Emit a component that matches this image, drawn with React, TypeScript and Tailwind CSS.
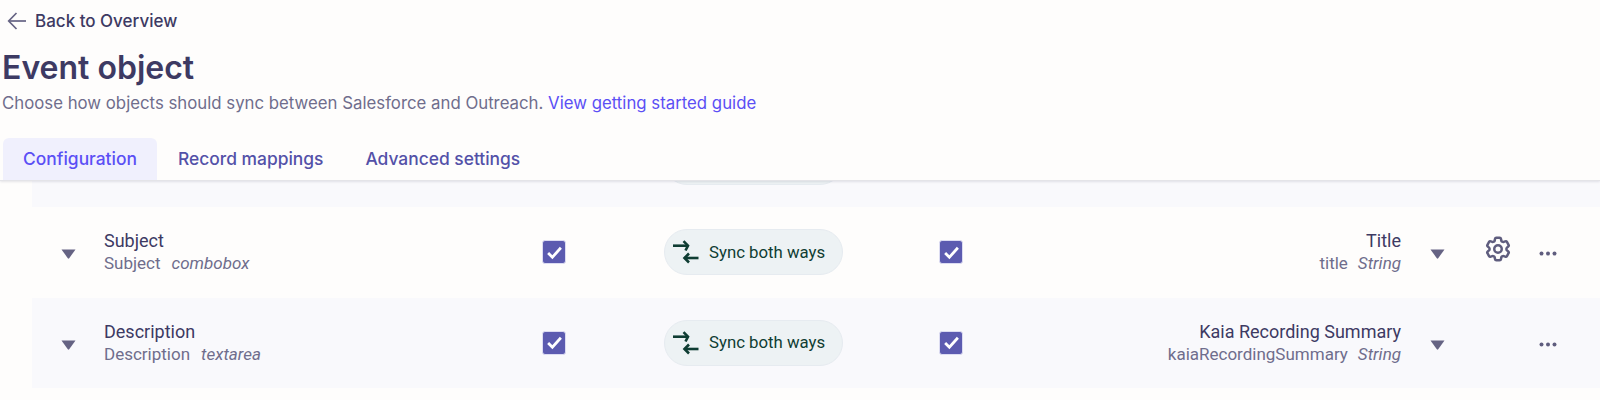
import React from "react";
import { HiOutlineCog6Tooth } from "react-icons/hi2";

const Caret = () => (
  <svg width="15" height="10" viewBox="0 0 15 10" className="block">
    <path d="M0.5 0.5H14.5L8.2 9.2a0.9 0.9 0 0 1-1.4 0Z" fill="#656383" />
  </svg>
);

const SyncIcon = () => (
  <svg width="28" height="24" viewBox="0 0 28 24" fill="none" stroke="#0f3d33" strokeWidth="2.6" className="block">
    <path d="M0 5.7H15" />
    <path d="M10.5 1.2L15 5.7L12.5 10.5" />
    <path d="M25.5 18H11.5" />
    <path d="M16 13.5L11.5 18L16 22.5" />
  </svg>
);

const Check = () => (
  <div className="flex h-[24px] w-[24px] items-center justify-center rounded-[3px] border border-[#dcdcf2] bg-[#5c5bb0]">
    <svg width="17" height="15" viewBox="0 0 16 14" fill="none" stroke="#ffffff" strokeWidth="2.6">
      <path d="M2 7.5L6 11.5L14 2.5" />
    </svg>
  </div>
);

const Dots = () => (
  <svg width="18" height="5" viewBox="0 0 18 5" className="block">
    <circle cx="2.5" cy="2.5" r="2" fill="#5f5d7e" />
    <circle cx="9" cy="2.5" r="2" fill="#5f5d7e" />
    <circle cx="15.5" cy="2.5" r="2" fill="#5f5d7e" />
  </svg>
);

const Pill = ({ children }: { children?: React.ReactNode }) => (
  <div className="flex h-[46px] w-[179px] items-center rounded-[23px] border border-[#e6ebf0] bg-[#edf2f4] pl-[8px] text-[16.8px] text-[#0f3d33]">
    {children}
  </div>
);

type RowProps = {
  name: string;
  api: string;
  kind: string;
  right: string;
  rightApi: string;
  gear?: boolean;
  striped?: boolean;
};

const Row = ({ name, api, kind, right, rightApi, gear, striped }: RowProps) => (
  <div className={`flex h-[90.5px] shrink-0 items-center font-['Roboto',sans-serif] ${striped ? "bg-[#f9f9fc]" : ""}`}>
    <div className="flex w-[72px] justify-end pr-[28px] pt-[4px]">
      <Caret />
    </div>
    <div className="flex w-[438px] flex-col">
      <div className="text-[18px] leading-[23px] text-[#3d3a63]">{name}</div>
      <div className="text-[17px] leading-[23px] text-[#6f6d8c]">
        {api}
        <span className="ml-[11px] italic">{kind}</span>
      </div>
    </div>
    <div className="flex w-[122px]"><Check /></div>
    <Pill>
      <SyncIcon />
      <span className="ml-[8px]">Sync both ways</span>
    </Pill>
    <div className="ml-[96px] flex w-[24px]"><Check /></div>
    <div className="flex w-[438px] flex-col items-end">
      <div className="text-[18px] leading-[23px] text-[#3d3a63]">{right}</div>
      <div className="text-[17px] leading-[23px] text-[#6f6d8c]">
        {rightApi}
        <span className="ml-[10px] italic">String</span>
      </div>
    </div>
    <div className="ml-[29px] w-[15px] pt-[4px]"><Caret /></div>
    <div className="ml-[38px] flex w-[30px] -translate-y-[3px] justify-center">
      {gear ? <HiOutlineCog6Tooth size={30} color="#5f5d7e" strokeWidth={2} /> : null}
    </div>
    <div className="ml-[26px] pt-[3px]"><Dots /></div>
  </div>
);

export default function App() {
  return (
    <div className="flex h-[400px] w-[1600px] flex-col overflow-hidden bg-[#fefdfc] font-['Inter',sans-serif]">
      <div className="relative z-10 h-[181px] shrink-0 border-b border-[#e4e4e8] bg-[#fefdfc] shadow-[0_1px_2px_rgba(60,60,90,0.12)]">
        <div className="flex items-center pl-[7px] pt-[9px]">
          <svg width="20" height="20" viewBox="0 0 20 20" fill="none" stroke="#656383" strokeWidth="1.7">
            <path d="M19 10H2" />
            <path d="M9.5 2L1.7 10L9.5 18" />
          </svg>
          <span className="ml-[8px] text-[17px] font-medium leading-[24px] text-[#3d3a63]">Back to Overview</span>
        </div>
        <h1 className="mt-[15px] pl-[2px] text-[32px] font-semibold leading-[40px] text-[#3d3a63]">Event object</h1>
        <p className="mt-[3px] pl-[2px] text-[16.8px] leading-[24px] text-[#6f6d8c]">
          Choose how objects should sync between Salesforce and Outreach.{" "}
          <span className="text-[#5b4ff5]">View getting started guide</span>
        </p>
        <div className="absolute bottom-0 left-[3px] flex h-[42px] items-center text-[17.4px] font-medium">
          <div className="flex h-full w-[154px] items-center justify-center rounded-t-[6px] bg-[#f0f0fd] text-[#5b4ff5]">Configuration</div>
          <div className="ml-[21px] text-[#5351a8]">Record mappings</div>
          <div className="ml-[42px] text-[#5351a8]">Advanced settings</div>
        </div>
      </div>
      <div className="ml-[32px] flex min-h-0 flex-1 flex-col overflow-hidden">
        <div className="flex h-[26px] shrink-0 items-end overflow-hidden bg-[#f9f9fc] pb-[22px] pl-[632px]">
          <div className="shrink-0"><Pill /></div>
        </div>
        <Row name="Subject" api="Subject" kind="combobox" right="Title" rightApi="title" gear />
        <Row striped name="Description" api="Description" kind="textarea" right="Kaia Recording Summary" rightApi="kaiaRecordingSummary" />
      </div>
    </div>
  );
}
